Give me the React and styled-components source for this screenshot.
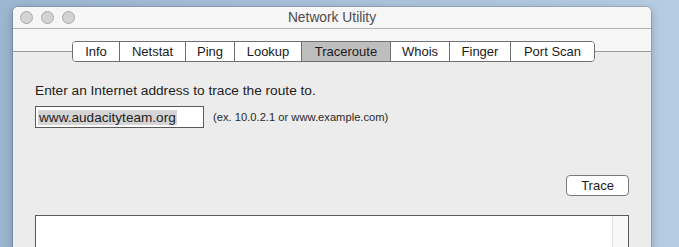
import React from 'react'
import styled, { createGlobalStyle } from 'styled-components'

const Global = createGlobalStyle`
  html, body { margin: 0; padding: 0; }
  body {
    width: 679px;
    height: 247px;
    overflow: hidden;
    font-family: "Liberation Sans", Arial, sans-serif;
  }
`

const Desktop = styled.div`
  width: 679px;
  height: 247px;
  overflow: hidden;
  background: linear-gradient(90deg, #9cb5d1 0%, #aac1da 50%, #b6cce2 100%);
  padding: 7px 0 0 13px;
  box-sizing: border-box;
`

const Window = styled.div`
  width: 638px;
  height: 320px;
  background: #ececec;
  border-radius: 5px 5px 0 0;
  overflow: hidden;
  box-shadow: 0 0 0 1px rgba(0, 0, 0, 0.12), 0 3px 10px rgba(0, 0, 0, 0.25);
  display: flex;
  flex-direction: column;
`

const TitleBar = styled.div`
  flex-shrink: 0;
  height: 21px;
  background: #f6f6f6;
  border-bottom: 1px solid #b4b4b4;
  display: flex;
  align-items: center;
  position: relative;
`

const Lights = styled.div`
  display: flex;
  gap: 8px;
  padding-left: 7px;
`

const Light = styled.span`
  width: 11px;
  height: 11px;
  border-radius: 50%;
  background: #d3d3d3;
  border: 1px solid #a9a9a9;
`

const Title = styled.div`
  position: absolute;
  left: 0;
  right: 0;
  text-align: center;
  font-size: 13.8px;
  color: #4d4d4d;
  pointer-events: none;
`

const TabStrip = styled.div`
  flex-shrink: 0;
  display: flex;
  align-items: center;
  padding-top: 12px;
  background: linear-gradient(#f6f6f6 0, #f6f6f6 22px, #ececec 22px);
`

const Rule = styled.div`
  height: 1px;
  background: #9a9a9a;
  width: ${p => (p.$grow ? 'auto' : `${p.$w}px`)};
  flex: ${p => (p.$grow ? 1 : 'none')};
`

const Tabs = styled.div`
  display: flex;
  height: 21px;
  border: 1px solid #6f6f6f;
  border-radius: 4px;
  overflow: hidden;
  box-sizing: border-box;
`

const Tab = styled.div`
  width: ${p => p.$w}px;
  box-sizing: border-box;
  display: flex;
  align-items: center;
  justify-content: center;
  font-size: 13px;
  color: #1b1b1b;
  background: ${p => (p.$active ? '#bebebe' : '#ffffff')};
  & + & { border-left: 1px solid #6f6f6f; }
`

const Content = styled.div`
  flex: 1;
  padding: 21px 22px 0 22px;
  display: flex;
  flex-direction: column;
`

const Prompt = styled.div`
  font-size: 13.7px;
  color: #222;
  line-height: 16px;
`

const InputRow = styled.div`
  display: flex;
  align-items: center;
  gap: 9px;
  margin-top: 7px;
`

const Field = styled.div`
  width: 169px;
  height: 22px;
  box-sizing: border-box;
  border: 1px solid #5a5a5a;
  background: #fff;
  display: flex;
  align-items: center;
  padding-left: 2px;
`

const Selected = styled.span`
  background: #d4d4d4;
  font-size: 13.6px;
  color: #222;
  line-height: 15px;
  padding: 0 1px;
`

const Hint = styled.span`
  font-size: 11.2px;
  color: #2a2a2a;
`

const ButtonRow = styled.div`
  display: flex;
  justify-content: flex-end;
  margin-top: 47px;
`

const Button = styled.div`
  width: 63px;
  height: 21px;
  box-sizing: border-box;
  border: 1px solid #7a7a7a;
  border-radius: 4px;
  background: #fff;
  display: flex;
  align-items: center;
  justify-content: center;
  font-size: 13px;
  color: #1b1b1b;
`

const Output = styled.div`
  margin-top: 19px;
  height: 60px;
  flex-shrink: 0;
  border: 1px solid #5a5a5a;
  background: #fff;
  display: flex;
  justify-content: flex-end;
`

const Scroll = styled.div`
  width: 15px;
  background: #f8f8f8;
  border-left: 1px solid #e2e2e2;
`

const tabs = [
  ['Info', 46],
  ['Netstat', 66],
  ['Ping', 49],
  ['Lookup', 67],
  ['Traceroute', 89],
  ['Whois', 59],
  ['Finger', 61],
  ['Port Scan', 84],
]

export default function App() {
  return (
    <>
      <Global />
      <Desktop>
        <Window>
          <TitleBar>
            <Lights>
              <Light />
              <Light />
              <Light />
            </Lights>
            <Title>Network Utility</Title>
          </TitleBar>
          <TabStrip>
            <Rule $w={59} />
            <Tabs>
              {tabs.map(([name, w]) => (
                <Tab key={name} $w={w} $active={name === 'Traceroute'}>
                  {name}
                </Tab>
              ))}
            </Tabs>
            <Rule $grow />
          </TabStrip>
          <Content>
            <Prompt>Enter an Internet address to trace the route to.</Prompt>
            <InputRow>
              <Field>
                <Selected>www.audacityteam.org</Selected>
              </Field>
              <Hint>(ex. 10.0.2.1 or www.example.com)</Hint>
            </InputRow>
            <ButtonRow>
              <Button>Trace</Button>
            </ButtonRow>
            <Output>
              <Scroll />
            </Output>
          </Content>
        </Window>
      </Desktop>
    </>
  )
}
